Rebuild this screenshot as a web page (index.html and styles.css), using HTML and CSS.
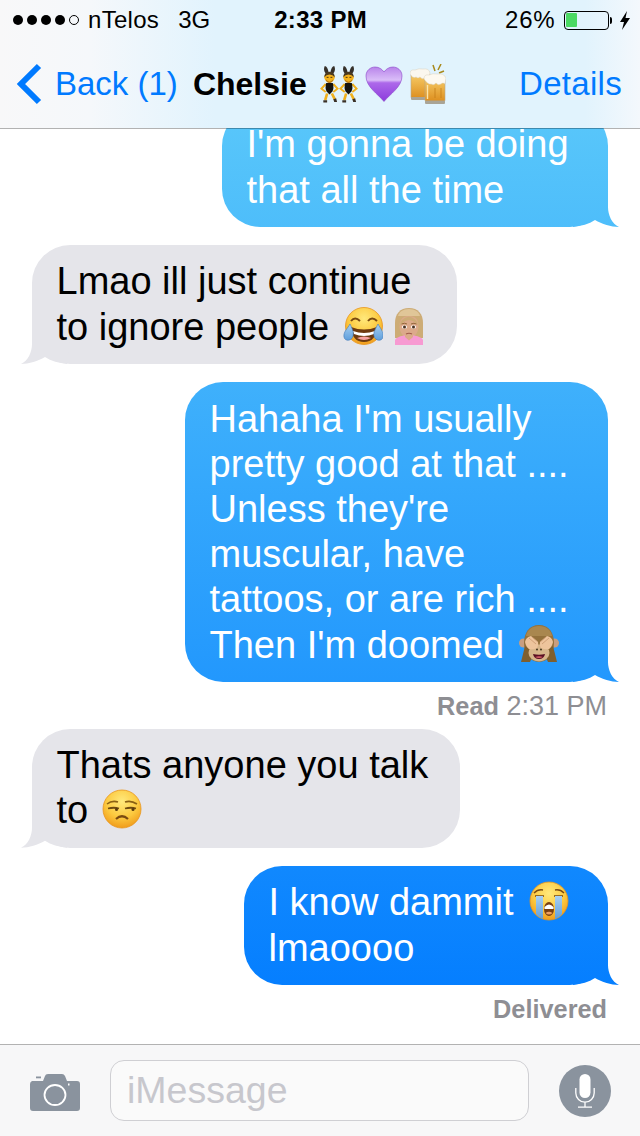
FILE: index.html
```html
<!DOCTYPE html>
<html lang="en">
<head>
<meta charset="utf-8">
<title>Messages</title>
<link rel="stylesheet" href="styles.css">
</head>
<body>
<svg class="defs" aria-hidden="true">
  <defs>
    <radialGradient id="face" cx="50%" cy="30%" r="70%"><stop offset="0" stop-color="#ffe97c"/><stop offset=".6" stop-color="#fcc93f"/><stop offset="1" stop-color="#f09c1c"/></radialGradient>
    <linearGradient id="heart" x1="0" y1="0" x2="0" y2="1"><stop offset="0" stop-color="#b884ea"/><stop offset=".38" stop-color="#dabdf8"/><stop offset=".46" stop-color="#ad68ea"/><stop offset="1" stop-color="#8c3cdc"/></linearGradient>
    <linearGradient id="beer" x1="0" y1="0" x2="0" y2="1"><stop offset="0" stop-color="#f8cf6a"/><stop offset="1" stop-color="#dc8c1c"/></linearGradient>
    <linearGradient id="tear" x1="0" y1="0" x2="0" y2="1"><stop offset="0" stop-color="#a8d0f2"/><stop offset="1" stop-color="#5f9edb"/></linearGradient>
    <symbol id="e-bunny" viewBox="0 0 20 40">
      <path d="M5 1q3 0 4 7l-3 1Q3 5 5 1ZM15 1q-3 0-4 7l3 1q3-4 1-8Z" fill="#36302a"/>
      <circle cx="10" cy="13" r="5.500" fill="#f4b21c"/>
      <path d="M4.500 13q0-6 5.500-6t5.500 6q-2-3-5.500-3t-5.500 3Z" fill="#4a3a20"/>
      <path d="M6 15q4 5 8 0-1 4-4 4t-4-4Z" fill="#b27414"/>
      <path d="M7 13h2M11 13h2" stroke="#4a3208" stroke-width="1"/>
      <path d="M6 20 1.500 25 6 28.500M14 20l4.500 5L14 28.500" fill="none" stroke="#f0b01c" stroke-width="2"/>
      <path d="M6.500 19h7q1.500 5-.5 9l-3 3-3-3q-2-4-.5-9Z" fill="#14120e"/>
      <path d="M7.500 30 5.500 37M12.500 30l3 6" stroke="#f0b01c" stroke-width="2.800" fill="none"/>
      <path d="M3.500 37h4v2.500h-4ZM14 36l3-1 1 4h-3Z" fill="#3a3026"/>
    </symbol>
    <symbol id="e-heart" viewBox="0 0 38 36">
      <path d="M19 35.500C13 28 1 21 1 10 1 4 6 1 10 1c4 0 7 2 9 5 2-3 5-5 9-5 4 0 9 3 9 9 0 11-12 18-18 25.500Z" fill="url(#heart)" stroke="#8a44c8" stroke-width=".6"/>
    </symbol>
    <symbol id="e-beers" viewBox="0 0 36 40">
      <path d="M23 1l2 6M31 0l-3 6M34 7l-5 2" stroke="#a8891c" stroke-width="1.500"/>
      <rect x="1" y="9" width="19" height="26" rx="2" fill="url(#beer)" stroke="#b9a98a" stroke-width=".6"/>
      <path d="M0 10q0-5 5-4 4-2 8-1 6-1 7 4l-1 5q-2-2-4 0-3 2-5-1-2 2-4 0-3 2-6-3Z" fill="#fbf7ee" stroke="#cfc7b4" stroke-width=".4"/>
      <rect x="1" y="33" width="19" height="3" rx="1" fill="#a9a496"/>
      <rect x="15" y="13" width="20" height="25" rx="2" fill="url(#beer)" stroke="#b9a98a" stroke-width=".6"/>
      <path d="M17.500 21v14" stroke="#fbe6ac" stroke-width="1.400"/>
      <path d="M25 24v10M31 24v10" stroke="#c07a16" stroke-width=".7"/>
      <path d="M14 15q0-5 5-4 4-2 8-1 7-1 9 4l-1 6q-2-2-4 0-3 2-5-1-2 3-5 1-3 1-7-5Z" fill="#fdf9f0" stroke="#cfc7b4" stroke-width=".4"/>
      <rect x="15" y="36.500" width="20" height="3.500" rx="1" fill="#a9a496"/>
    </symbol>
    <symbol id="e-joy" viewBox="0 0 40 40">
      <circle cx="21" cy="20" r="18.500" fill="url(#face)" stroke="#e8941a" stroke-width=".8"/>
      <path d="M8 15q4-5 9 0M25 15q4-5 9 0" fill="none" stroke="#7a4a10" stroke-width="2"/>
      <path d="M8 21q13 5 26 0-1 15-13 15T8 21Z" fill="#6e3a10"/>
      <path d="M10 25q11 4 22 0l-1 3q-10 4-20 0Z" fill="#fff"/>
      <path d="M14 32q7-3 14 0-7 4-14 0Z" fill="#f6a0a0"/>
      <path d="M7 18c-2 4-7 8-6 13s8 4 9-1c1-4-1-8-3-12ZM35 18c2 4 6 8 5 13s-8 4-9-1c-1-4 2-8 4-12Z" fill="url(#tear)" stroke="#3f78b8" stroke-width=".6"/>
    </symbol>
    <symbol id="e-woman" viewBox="0 0 30 38">
      <path d="M15 1C6 1 1 7 1 16v15h28V16C29 7 24 1 15 1Z" fill="#cdac76"/>
      <path d="M15 2C9 2 5 5 4 9h22c-1-4-5-7-11-7Z" fill="#e0c698"/>
      <path d="M5.500 19c0-6 3-10 9.500-10s9.500 4 9.500 10c0 7-4 11.500-9.500 11.500S5.500 26 5.500 19Z" fill="#dcaa8a"/>
      <path d="M5.500 19q1-8 9.500-9.500 8 1.500 9.500 9.500-3-5-9.500-6-6 1-9.500 6Z" fill="#cdac76"/>
      <ellipse cx="10.500" cy="20" rx="2.600" ry="1.700" fill="#fff"/><ellipse cx="19.500" cy="20" rx="2.600" ry="1.700" fill="#fff"/>
      <circle cx="10.500" cy="20" r="1.500" fill="#4a3020"/><circle cx="19.500" cy="20" r="1.500" fill="#4a3020"/>
      <path d="M7.500 17q3-1.500 5.500 0M17 17q3-1.500 5.500 0" stroke="#8a6030" stroke-width=".9" fill="none"/>
      <path d="M12 27q3-1.500 6 0" fill="none" stroke="#a05a4a" stroke-width="1.100"/>
      <path d="M1 38v-5q1-3 9-4.500h10q8 1.500 9 4.500v5Z" fill="#f79ad2"/>
      <path d="M11 28h8v2l-4 3.500-4-3.500Z" fill="#dcaa8a"/>
    </symbol>
    <symbol id="e-monkey" viewBox="0 0 42 40">
      <circle cx="5.500" cy="19" r="4.500" fill="#c89e80"/><circle cx="36.500" cy="19" r="4.500" fill="#c89e80"/>
      <path d="M21 1C11 1 6 9 6 19s6 19 15 19 15-9 15-19S31 1 21 1Z" fill="#94713c"/>
      <path d="M21 2c-7 0-12 4-13 10h26C33 6 28 2 21 2Z" fill="#a9874f"/>
      <path d="M7 22 3 38h9l4-9ZM35 22l4 16h-9l-4-9Z" fill="#7f5f2e"/>
      <ellipse cx="21" cy="29" rx="10.500" ry="8.500" fill="#d7b58a"/>
      <path d="M15 30q6 1.500 12 0-1 5-6 5t-6-5Z" fill="#5a0f22"/>
      <path d="M17 33q4-1.500 8 0-4 2-8 0Z" fill="#d8606a"/>
      <circle cx="19" cy="25.500" r=".9" fill="#3a2a14"/><circle cx="23" cy="25.500" r=".9" fill="#3a2a14"/>
      <path d="M7 18q1-5 6-6l7 6q1 3-1 6-4 2-8 1-3-2-4-7ZM35 18q-1-5-6-6l-7 6q-1 3 1 6 4 2 8 1 3-2 4-7Z" fill="#eec49c"/>
      <path d="M11 14l7 6M14 13l6 5M31 14l-7 6M28 13l-6 5" stroke="#c99870" stroke-width=".8"/>
    </symbol>
    <symbol id="e-unamused" viewBox="0 0 40 40">
      <circle cx="20" cy="20" r="19" fill="url(#face)" stroke="#e8941a" stroke-width=".8"/>
      <path d="M5 15q5-4 11-2M23 13q6-2 12 2" fill="none" stroke="#8a6014" stroke-width="1.600"/>
      <path d="M6 19.500q6-1.500 11 0M23 19.500q6-1.500 11 0" fill="none" stroke="#6e4a10" stroke-width="1.800"/>
      <circle cx="14.500" cy="20.500" r="1.500" fill="#5a3a0c"/><circle cx="31" cy="20.500" r="1.500" fill="#5a3a0c"/>
      <path d="M14 30q6-5.500 12 0" fill="none" stroke="#7a4a10" stroke-width="2.200"/>
    </symbol>
    <symbol id="e-crying" viewBox="0 0 40 40">
      <circle cx="20" cy="20" r="19" fill="url(#face)" stroke="#e8941a" stroke-width=".8"/>
      <path d="M5 12q4-4 9-3M35 12q-4-4-9-3" fill="none" stroke="#7a4a10" stroke-width="1.400"/>
      <path d="M6 15h9M25 15h9" stroke="#7a4a10" stroke-width="1.600"/>
      <path d="M7 15h7v23q-4-1-7-5ZM26 15h7v18q-3 4-7 5Z" fill="url(#tear)"/>
      <ellipse cx="20" cy="28" rx="5" ry="7" fill="#7a3f10"/>
      <path d="M15.500 26q4.500-5 9 0v2h-9Z" fill="#fff"/>
      <path d="M16.500 32q3.500-2.500 7 0-3.500 3-7 0Z" fill="#f0a060"/>
    </symbol>
  </defs>
</svg>

<div class="phone">
  <header class="top">
    <div class="status">
      <div class="signal">
        <span class="dot"></span><span class="dot"></span><span class="dot"></span><span class="dot"></span><span class="dot dot-off"></span>
      </div>
      <span class="carrier">nTelos</span>
      <span class="network">3G</span>
      <span class="clock">2:33 PM</span>
      <span class="percent">26%</span>
      <div class="battery"><div class="battery-fill"></div></div>
      <span class="battery-nub"></span>
      <svg class="bolt" viewBox="0 0 12 19"><path d="M8 0 1 11h4l-2 8 8-12H6.500Z" fill="#000"/></svg>
    </div>
    <nav class="nav">
      <svg class="chevron" viewBox="0 0 26 42"><path d="M23 3 5 21l18 18" fill="none" stroke="#007aff" stroke-width="6"/></svg>
      <span class="back">Back (1)</span>
      <span class="title">Chelsie</span>
      <span class="title-icons">
        <svg class="ti-bunny"><use href="#e-bunny"/></svg><svg class="ti-bunny"><use href="#e-bunny"/></svg><svg class="ti-heart"><use href="#e-heart"/></svg><svg class="ti-beers"><use href="#e-beers"/></svg>
      </span>
      <span class="details">Details</span>
    </nav>
  </header>

  <main class="thread">
    <div class="bubble out w-386">I'm gonna be doing<br>that all the time</div>
    <div class="bubble in w-425">Lmao ill just continue<br>to ignore people <svg class="emoji"><use href="#e-joy"/></svg> <svg class="emoji emoji-woman"><use href="#e-woman"/></svg></div>
    <div class="bubble out w-423">Hahaha I'm usually<br>pretty good at that ....<br>Unless they're<br>muscular, have<br>tattoos, or are rich ....<br>Then I'm doomed <svg class="emoji emoji-monkey"><use href="#e-monkey"/></svg></div>
    <p class="receipt"><b>Read</b> 2:31 PM</p>
    <div class="bubble in w-428 after-receipt">Thats anyone you talk<br>to <svg class="emoji"><use href="#e-unamused"/></svg></div>
    <div class="bubble out w-364">I know dammit <svg class="emoji emoji-crying"><use href="#e-crying"/></svg><br>lmaoooo</div>
    <p class="receipt receipt-last"><b>Delivered</b></p>
  </main>

  <footer class="composer">
    <svg class="camera" viewBox="0 0 50 37">
      <path d="M13 7l2-5q.5-2 3-2h14q2 0 3 2l2 5h10q3 0 3 3v24q0 3-3 3H3q-3 0-3-3V10q0-2 2-3Z" fill="#8a939e"/>
      <rect x="6" y="2.500" width="5" height="1.800" fill="#8a939e"/>
      <ellipse cx="25" cy="21" rx="10.500" ry="10" fill="none" stroke="#fff" stroke-width="1.800"/>
      <rect x="38" y="9.500" width="1.500" height="2" fill="#fff"/>
    </svg>
    <div class="field">iMessage</div>
    <div class="mic">
      <svg class="mic-glyph" viewBox="0 0 20 34">
        <rect x="4.500" y="0" width="11" height="24" rx="5.500" fill="#fff"/>
        <path d="M.8 14v5a9.200 9.200 0 0 0 18.400 0v-5M10 28v5M3 33.200h14" fill="none" stroke="#fff" stroke-width="1.300"/>
      </svg>
    </div>
  </footer>
</div>
</body>
</html>
```

FILE: styles.css
```css
* { box-sizing: border-box; }
html, body { margin: 0; padding: 0; }
body { background: #fff; font-family: "Liberation Sans", Arial, sans-serif; color: #000; }
.defs { position: absolute; width: 0; height: 0; }

.phone { width: 640px; height: 1136px; display: flex; flex-direction: column; overflow: hidden; }

.top {
  height: 128px; flex: none;
  background: linear-gradient(90deg, #f8f8f9 0, #f5f8fb 90px, #e1f3fd 215px, #e1f3fd 585px, #f4f8fc 640px);
}
.status { height: 40px; display: flex; align-items: center; font-size: 24px; }
.signal { display: flex; gap: 4px; margin-left: 13px; }
.dot { width: 10px; height: 10px; border-radius: 50%; background: #000; }
.dot-off { background: none; border: 1px solid #000; }
.carrier { margin-left: 9px; letter-spacing: .3px; }
.network { margin-left: 19px; }
.clock { margin-left: 64px; font-weight: 700; letter-spacing: .3px; }
.percent { margin-left: auto; letter-spacing: .8px; }
.battery { width: 45px; height: 19px; margin-left: 8px; padding: 1.500px; border: 1.500px solid #000; border-radius: 4px; }
.battery-fill { width: 11px; height: 100%; background: #4cd964; border-radius: 1px; }
.battery-nub { width: 2.500px; height: 7px; background: #000; border-radius: 0 2px 2px 0; margin-left: 1px; }
.bolt { width: 12px; height: 19px; margin-left: 7px; margin-right: 9px; }

.nav { height: 88px; display: flex; align-items: center; font-size: 33px; }
.chevron { width: 26px; height: 42px; margin-left: 16px; }
.back { margin-left: 13px; color: #007aff; }
.title { margin-left: 15px; font-size: 32px; font-weight: 700; }
.title-icons { display: flex; align-items: center; margin-left: 13px; }
.ti-bunny { width: 19px; height: 40px; }
.ti-heart { width: 38px; height: 36px; margin-left: 7px; }
.ti-beers { width: 36px; height: 40px; margin-left: 7px; }
.details { margin-left: auto; margin-right: 18px; color: #007aff; letter-spacing: .3px; }

.thread {
  flex: 1; min-height: 0; position: relative; overflow: hidden;
  display: flex; flex-direction: column; justify-content: flex-end;
  padding: 0 32px 0;
}
.thread::after { content: ""; position: absolute; left: 0; right: 0; top: 0; height: 1px; background: rgba(0, 0, 0, .3); }

.bubble {
  position: relative; flex: none; isolation: isolate;
  padding: 14.200px 0 14.200px 24.500px;
  font-size: 38px; line-height: 45.200px; border-radius: 38px;
  margin-top: 18.400px;
}
.bubble::after {
  content: ""; position: absolute; bottom: 0; z-index: -1; width: 50px; height: 40px;
}
.in { align-self: flex-start; background: #e5e5ea; color: #000; }
.in::after {
  left: -11px; background: #e5e5ea;
  clip-path: path("M11 0 L11 20 C11 28 7 37 0 40 C8 40 17 37 24 33 C30 37 38 39 46 40 L50 0 Z");
}
.out {
  align-self: flex-end; color: #fff;
  background: linear-gradient(180deg, #5ac8fa 100px, #007aff 1040px) fixed;
}
.out::after {
  right: -11px;
  background: linear-gradient(180deg, #5ac8fa 100px, #007aff 1040px) fixed;
  clip-path: path("M39 0 L39 20 C39 28 43 37 50 40 C42 40 33 37 26 33 C20 37 12 39 4 40 L0 0 Z");
}
.w-386 { width: 386px; }
.w-425 { width: 425px; }
.w-423 { width: 423px; }
.w-428 { width: 428px; }
.w-364 { width: 364px; }
.after-receipt { margin-top: 0; }

.emoji { width: 40px; height: 40px; vertical-align: -6px; margin-left: 3px; }
.emoji-woman { width: 30px; height: 38px; margin-left: 1px; vertical-align: -5px; }
.emoji-monkey { width: 42px; }
.emoji-crying { margin-left: 5px; }

.receipt { flex: none; margin: 9px 1px 0 0; height: 38px; text-align: right; font-size: 27px; line-height: 30px; color: #8e8e93; }
.receipt b { font-size: 25.300px; font-weight: 700; }
.receipt-last { height: 50px; }

.composer {
  height: 92px; flex: none; display: flex; align-items: center;
  background: #f7f7f8; border-top: 1px solid #b2b2b2; padding: 0 29px 0 30px;
}
.camera { width: 50px; height: 37px; margin-top: 4px; }
.field {
  width: 419px; height: 61px; margin-left: 30px;
  display: flex; align-items: center; padding-left: 16px;
  background: #fafafa; border: 1.500px solid #cfcfd3; border-radius: 14px;
  font-size: 37.500px; color: #c7c7cd;
}
.mic { width: 52px; height: 52px; margin-left: auto; border-radius: 50%; background: #8a939e; display: flex; align-items: center; justify-content: center; }
.mic-glyph { width: 20px; height: 34px; }
```
